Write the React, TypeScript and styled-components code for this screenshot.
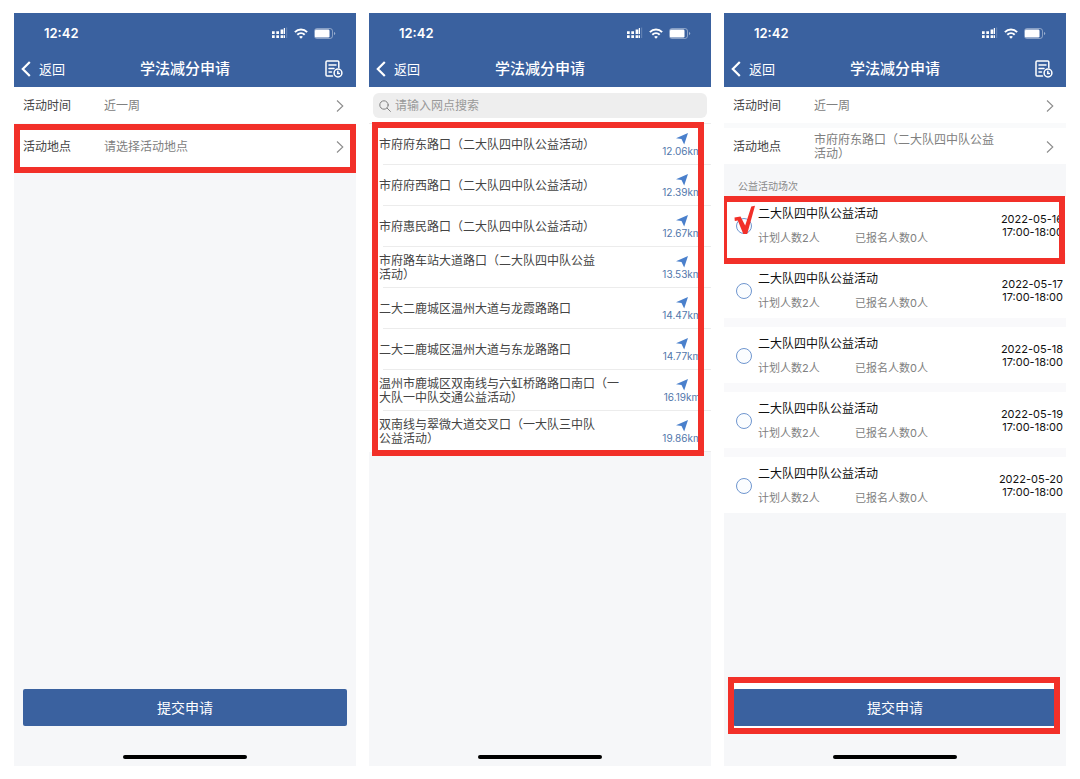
import React from "react";
import styled, { createGlobalStyle, css } from "styled-components";

const blue = "#3a619f";
const red = "#f23029";

const GlobalStyle = createGlobalStyle`
  *, *::before, *::after { box-sizing: border-box; }
  body {
    margin: 0;
    background: #fff;
    font-family: Inter, "Noto Sans CJK SC", sans-serif;
    font-size: 12px;
    line-height: 14px;
    color: #444;
  }
  button, input { font: inherit; color: inherit; }
`;

const buttonReset = css`
  margin: 0;
  border: 0;
  background: none;
  text-align: left;
  cursor: pointer;
`;

const Board = styled.main`
  display: grid;
  grid-template-columns: repeat(3, minmax(0, 1fr));
  gap: 13px;
  min-height: 100vh;
  padding: 13px 14px;
`;

const Phone = styled.section`
  display: flex;
  flex-direction: column;
  background: #f6f7f9;
`;

const Header = styled.header`
  padding-bottom: 2px;
  background: ${blue};
  color: #fff;
`;

const StatusBar = styled.div`
  display: flex;
  align-items: center;
  justify-content: space-between;
  height: 40px;
  padding: 0 20px 0 30px;
  font-size: 13px;
  font-weight: 600;
`;

const StatusIcons = styled.div`
  display: flex;
  align-items: center;
  gap: 6px;
`;

const NavBar = styled.div`
  display: grid;
  grid-template-columns: 1fr auto 1fr;
  align-items: center;
  height: 32px;
  padding: 0 7px;
`;

const BackButton = styled.button`
  ${buttonReset}
  display: flex;
  align-items: center;
  gap: 8px;
  padding: 0;
  font-size: 13px;
`;

const Title = styled.h1`
  margin: 0;
  font-size: 15px;
  font-weight: 500;
  line-height: 20px;
`;

const RecordsButton = styled.button`
  ${buttonReset}
  display: flex;
  justify-self: end;
  padding: 0 6px;
`;

const Fields = styled.div`
  display: grid;
  gap: 5px;
  background: #f9fafb;
`;

const FieldRow = styled.button`
  ${buttonReset}
  display: grid;
  grid-template-columns: 81px 1fr auto;
  align-items: center;
  width: 100%;
  height: 36px;
  padding: 1px 12px 0 9px;
  background: #fff;
`;

const FieldValue = styled.span`
  color: #808080;
  white-space: pre-line;
`;

/* Red marker frame drawn over its content, with a white fill beneath it. */
const Marked = styled.div<{ $inset: string; $border?: string }>`
  position: relative;
  isolation: isolate;

  &::before,
  &::after {
    content: "";
    position: absolute;
    inset: ${(p) => p.$inset};
    pointer-events: none;
  }
  &::before {
    z-index: -1;
    background: #fff;
  }
  &::after {
    border: solid ${red};
    border-width: ${(p) => p.$border ?? "6px"};
  }
`;

const SearchPane = styled.div`
  height: 37px;
  padding: 6px 4px 5px;
  border-bottom: 1px solid #ececec;
  background: #fff;
`;

const SearchBox = styled.label`
  display: flex;
  align-items: center;
  gap: 4px;
  height: 25px;
  padding: 0 6px;
  border-radius: 6px;
  background: #eee;
`;

const SearchInput = styled.input`
  flex: 1;
  min-width: 0;
  padding: 0;
  border: 0;
  outline: 0;
  background: none;

  &::placeholder {
    color: #999;
    opacity: 1;
  }
`;

const List = styled.ul`
  margin: 0;
  padding: 0;
  list-style: none;
`;

const Place = styled.li`
  background: #fff;

  &::after {
    content: "";
    display: block;
    height: 1px;
    margin-left: 14px;
    background: #ececec;
  }
`;

const PlaceButton = styled.button`
  ${buttonReset}
  display: flex;
  align-items: center;
  justify-content: space-between;
  width: 100%;
  height: 40px;
  padding: 1px 9px 0 10px;
  white-space: pre-line;
`;

const Distance = styled.span`
  display: grid;
  justify-items: center;
  min-width: 40px;
  font-size: 10px;
  line-height: 12px;
  color: #5277ab;
`;

const SectionLabel = styled.h2`
  margin: 0;
  padding: 15px 14px 4px;
  font-size: 10px;
  font-weight: 400;
  line-height: 14px;
  color: #8a8a8a;
`;

const Sessions = styled.div`
  display: grid;
  gap: 9px;
  background: #f9f9fb;
`;

const Session = styled.label`
  display: grid;
  grid-template-columns: 16px 1fr auto;
  align-items: center;
  gap: 6px;
  height: 56px;
  padding: 1px 3px 0 12px;
  background: #fff;
  cursor: pointer;
`;

const Radio = styled.input`
  appearance: none;
  width: 16px;
  height: 16px;
  margin: 0;
  border: 1px solid #6f96cf;
  border-radius: 50%;
  background: #fbfdff;
`;

const SessionInfo = styled.span`
  display: grid;
  gap: 10px;
`;

const SessionName = styled.span`
  color: #111;
`;

const Counts = styled.span`
  display: grid;
  grid-template-columns: 97px auto;
  justify-content: start;
  font-size: 11px;
  color: #808080;
`;

const When = styled.span`
  font-size: 11px;
  line-height: 13px;
  text-align: right;
  color: #111;
`;

const Tick = styled.svg`
  position: absolute;
  top: 8px;
  left: 10px;
  pointer-events: none;
`;

const Footer = styled.footer`
  display: grid;
  gap: 29px;
  margin-top: auto;
  padding: 0 9px 7px;
`;

const Submit = styled.button`
  ${buttonReset}
  display: block;
  width: 100%;
  height: 37px;
  border-radius: 2px;
  background: ${blue};
  color: #fff;
  font-size: 14px;
  text-align: center;
`;

const HomeBar = styled.div`
  justify-self: center;
  width: 124px;
  height: 4px;
  border-radius: 2px;
  background: #000;
`;

const SignalIcon = () => (
  <svg width="16" height="12" viewBox="0 0 16 12" fill="#fff" aria-hidden="true">
    <path d="M0 8.300h2.700V11H0zM4.300 8.300H7V11H4.300zM8.600 8.300h2.700V11H8.600zM11.800 8.300H13V11h-1.200z" />
    <path d="M0 4.200h2.700v2.700H0zM4.300 4.200H7v2.700H4.300zM8.600 2.600h2.700v4.300H8.600zM11.800 1H13v5.900h-1.200z" />
    <path d="M14 .5h1.200V11H14z" opacity=".2" />
  </svg>
);

const WifiIcon = () => (
  <svg width="14" height="11" viewBox="0 0 14 11" fill="none" stroke="#fff" strokeWidth="2" aria-hidden="true">
    <path d="M.9 4.100a8.700 8.700 0 0 1 12.200 0" />
    <path d="M3.300 6.800a5.300 5.300 0 0 1 7.400 0" />
    <path d="M7 10.800 5.100 8.800a2.800 2.800 0 0 1 3.800 0z" fill="#fff" stroke="none" />
  </svg>
);

const BatteryIcon = () => (
  <svg width="22" height="11" viewBox="0 0 22 11" aria-hidden="true">
    <rect x=".5" y=".5" width="18" height="10" rx="2.5" fill="none" stroke="#fff" opacity=".4" />
    <rect x="1" y="1.500" width="14.500" height="8" rx="1.200" fill="#fff" />
    <path d="M20 4v3q1.200-.4 1.200-1.500T20 4z" fill="#fff" opacity=".5" />
  </svg>
);

const BackIcon = () => (
  <svg width="10" height="16" viewBox="0 0 10 16" fill="none" stroke="#fff" strokeWidth="2.200" aria-hidden="true">
    <path d="M8.800 1 1.800 8l7 7" />
  </svg>
);

const RecordsIcon = () => (
  <svg width="18" height="18" viewBox="0 0 18 18" fill="none" stroke="#fff" strokeWidth="1.500" strokeLinecap="round" aria-hidden="true">
    <path d="M7.500 16H2a1 1 0 0 1-1-1V2a1 1 0 0 1 1-1h10.800a1 1 0 0 1 1 1v5.500" />
    <path d="M4 5h7M4 8.500h5M4 12h2.500" />
    <circle cx="13" cy="13" r="3.900" />
    <path d="M12.800 11.300v2.200h1.600" />
  </svg>
);

const ChevronIcon = () => (
  <svg width="8" height="14" viewBox="0 0 8 14" fill="none" stroke="#8c8c8c" strokeWidth="1.100" aria-hidden="true">
    <path d="m1 1.500 5.800 5.500L1 12.500" />
  </svg>
);

const SearchIcon = () => (
  <svg width="12" height="12" viewBox="0 0 12 12" fill="none" stroke="#808080" strokeLinecap="round" aria-hidden="true">
    <circle cx="5" cy="5" r="4.200" />
    <path d="m8.200 8.200 3.200 3.200" />
  </svg>
);

const ArrowIcon = () => (
  <svg width="12" height="12" viewBox="0 0 12 12" fill="#4a80cc" aria-hidden="true">
    <path d="M12 0 0 5.200l5.500.9L8.200 11.500z" />
  </svg>
);

const places = [
  { name: "市府府东路口（二大队四中队公益活动）", km: "12.06km" },
  { name: "市府府西路口（二大队四中队公益活动）", km: "12.39km" },
  { name: "市府惠民路口（二大队四中队公益活动）", km: "12.67km" },
  { name: "市府路车站大道路口（二大队四中队公益\n活动）", km: "13.53km" },
  { name: "二大二鹿城区温州大道与龙霞路路口", km: "14.47km" },
  { name: "二大二鹿城区温州大道与东龙路路口", km: "14.77km" },
  { name: "温州市鹿城区双南线与六虹桥路路口南口（一\n大队一中队交通公益活动）", km: "16.19km" },
  { name: "双南线与翠微大道交叉口（一大队三中队\n公益活动）", km: "19.86km" },
];

const laterDates = ["2022-05-17", "2022-05-18", "2022-05-19", "2022-05-20"];

function PhoneHeader({ records }: { records?: boolean }) {
  return (
    <Header>
      <StatusBar>
        <span>12:42</span>
        <StatusIcons>
          <SignalIcon />
          <WifiIcon />
          <BatteryIcon />
        </StatusIcons>
      </StatusBar>
      <NavBar>
        <BackButton type="button">
          <BackIcon />
          返回
        </BackButton>
        <Title>学法减分申请</Title>
        {records && (
          <RecordsButton type="button" aria-label="申请记录">
            <RecordsIcon />
          </RecordsButton>
        )}
      </NavBar>
    </Header>
  );
}

function Field({ label, value }: { label: string; value: string }) {
  return (
    <FieldRow type="button">
      <span>{label}</span>
      <FieldValue>{value}</FieldValue>
      <ChevronIcon />
    </FieldRow>
  );
}

function SessionRow({ date }: { date: string }) {
  return (
    <Session>
      <Radio type="radio" name="session" value={date} />
      <SessionInfo>
        <SessionName>二大队四中队公益活动</SessionName>
        <Counts>
          <span>计划人数2人</span>
          <span>已报名人数0人</span>
        </Counts>
      </SessionInfo>
      <When>
        {date}
        <br />
        17:00-18:00
      </When>
    </Session>
  );
}

export default function App() {
  return (
    <>
      <GlobalStyle />
      <Board>
        <Phone>
          <PhoneHeader records />
          <Fields>
            <Field label="活动时间" value="近一周" />
            <Marked $inset="-4px 0 -9px 0">
              <Field label="活动地点" value="请选择活动地点" />
            </Marked>
          </Fields>
          <Footer>
            <Submit type="button">提交申请</Submit>
            <HomeBar />
          </Footer>
        </Phone>

        <Phone>
          <PhoneHeader />
          <SearchPane>
            <SearchBox>
              <SearchIcon />
              <SearchInput type="text" placeholder="请输入网点搜索" aria-label="网点搜索" />
            </SearchBox>
          </SearchPane>
          <Marked $inset="-2px 7px -4px 3px">
            <List>
              {places.map((place) => (
                <Place key={place.name}>
                  <PlaceButton type="button">
                    <span>{place.name}</span>
                    <Distance>
                      <ArrowIcon />
                      {place.km}
                    </Distance>
                  </PlaceButton>
                </Place>
              ))}
            </List>
          </Marked>
          <Footer>
            <HomeBar />
          </Footer>
        </Phone>

        <Phone>
          <PhoneHeader records />
          <Fields>
            <Field label="活动时间" value="近一周" />
            <Field label="活动地点" value={"市府府东路口（二大队四中队公益\n活动）"} />
          </Fields>
          <SectionLabel>公益活动场次</SectionLabel>
          <Sessions>
            <Marked $inset="-1px 1px -11px 0" $border="6px 6px 6px 3px">
              <SessionRow date="2022-05-16" />
              <Tick width="21" height="30" viewBox="0 0 21 30" fill={red} aria-hidden="true">
                <path d="M.5 12.500 6.500 11.500l4.700 9L17.300 1.500l3.700-.8L13.200 29H9.300L3.800 15.500l-3 .5z" />
              </Tick>
            </Marked>
            {laterDates.map((date) => (
              <SessionRow key={date} date={date} />
            ))}
          </Sessions>
          <Footer>
            <Marked $inset="-12px -3px -8px -5px">
              <Submit type="button">提交申请</Submit>
            </Marked>
            <HomeBar />
          </Footer>
        </Phone>
      </Board>
    </>
  );
}
